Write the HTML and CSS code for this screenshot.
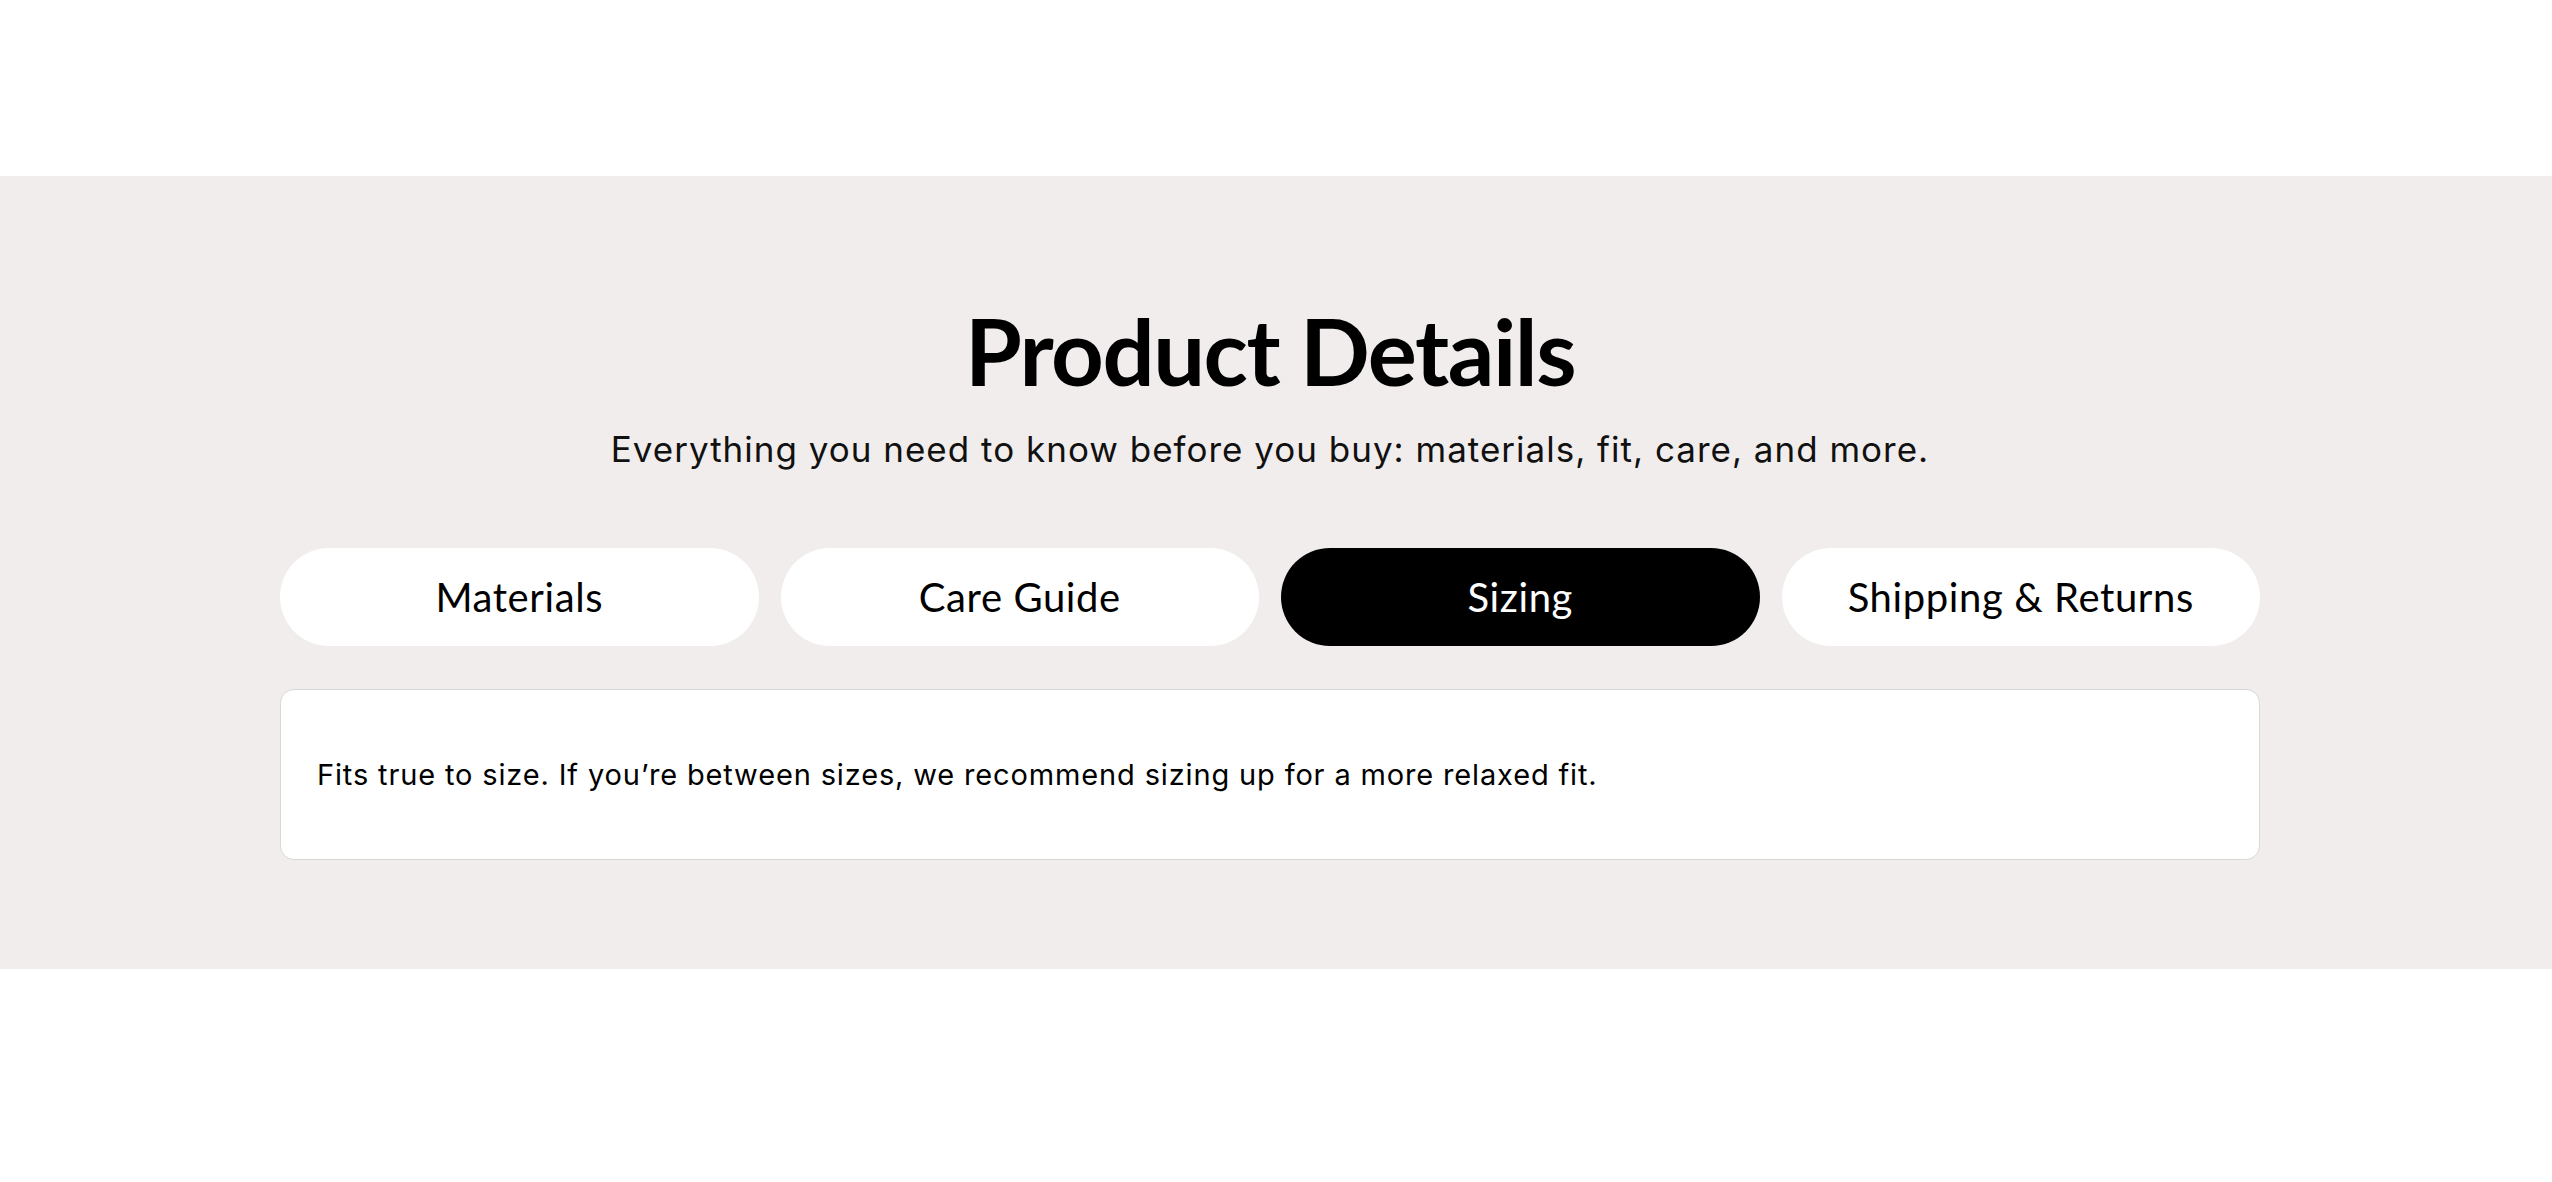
FILE: index.html
```html
<!DOCTYPE html>
<html lang="en">
<head>
<meta charset="UTF-8" />
<meta name="viewport" content="width=device-width, initial-scale=1" />
<title>Product Details</title>
<link rel="stylesheet" href="styles.css">
</head>
<body>

<div class="top-space"></div>

<section class="details">
  <div class="wrap">
    <h2 class="details-title">Product Details</h2>
    <p class="details-sub">Everything you need to know before you buy: materials, fit, care, and more.</p>

    <div class="tabs">
      <button class="tab" data-tab="materials">Materials</button>
      <button class="tab" data-tab="care">Care Guide</button>
      <button class="tab active" data-tab="sizing">Sizing</button>
      <button class="tab" data-tab="shipping">Shipping &amp; Returns</button>
    </div>

    <div class="panel">
      <p id="panel-text">Fits true to size. If you’re between sizes, we recommend sizing up for a more relaxed fit.</p>
    </div>
  </div>
</section>

<div class="bottom-space"></div>

<script>
  const texts = {
    materials: 'Made from 100% organic cotton with a soft brushed finish.',
    care: 'Machine wash cold with like colours. Tumble dry low or hang to dry.',
    sizing: 'Fits true to size. If you’re between sizes, we recommend sizing up for a more relaxed fit.',
    shipping: 'Free shipping on orders over $50. Returns accepted within 30 days.'
  };
  const tabs = document.querySelectorAll('.tab');
  const panelText = document.getElementById('panel-text');
  tabs.forEach(tab => {
    tab.addEventListener('click', () => {
      tabs.forEach(t => t.classList.remove('active'));
      tab.classList.add('active');
      panelText.textContent = texts[tab.dataset.tab];
    });
  });
</script>

</body>
</html>
```

FILE: styles.css
```css
body { margin: 0; padding-right: 12px; background: #fff; color: #000; font-family: Inter, "Liberation Sans", sans-serif; }
.top-space { height: 176px; }
.bottom-space { height: 213px; }
.details {
  background: #f0edec; padding: 129px 0 109px;
  margin-right: -12px; padding-right: 12px;
}
.wrap { max-width: 1980px; margin: 0 auto; }
.details-title {
  margin: 0; text-align: center;
  font-family: Lato, "Open Sans", sans-serif; font-weight: 700;
  font-size: 92px; line-height: 1; letter-spacing: -1.5px;
}
.details-sub {
  margin: 29px 0 0; text-align: center;
  font-size: 35px; line-height: 1.37; color: #111; letter-spacing: 1px;
}
.tabs {
  display: grid; grid-template-columns: repeat(4, 1fr); gap: 22px;
  margin-top: 74px;
}
.tab {
  height: 98px; border: none; border-radius: 49px;
  background: #fff; color: #000; cursor: pointer;
  font-family: Lato, "Open Sans", sans-serif; font-size: 40px; font-weight: 400;
  letter-spacing: 0.6px;
}
.tab.active { background: #000; color: #fff; }
.panel {
  margin-top: 43px; background: #fff;
  border: 1px solid #d8d8d8; border-radius: 14px;
  padding: 63px 36px;
}
.panel p {
  margin: 0; font-size: 29px; line-height: 1.5; letter-spacing: 0.85px; color: #000;
}
```
